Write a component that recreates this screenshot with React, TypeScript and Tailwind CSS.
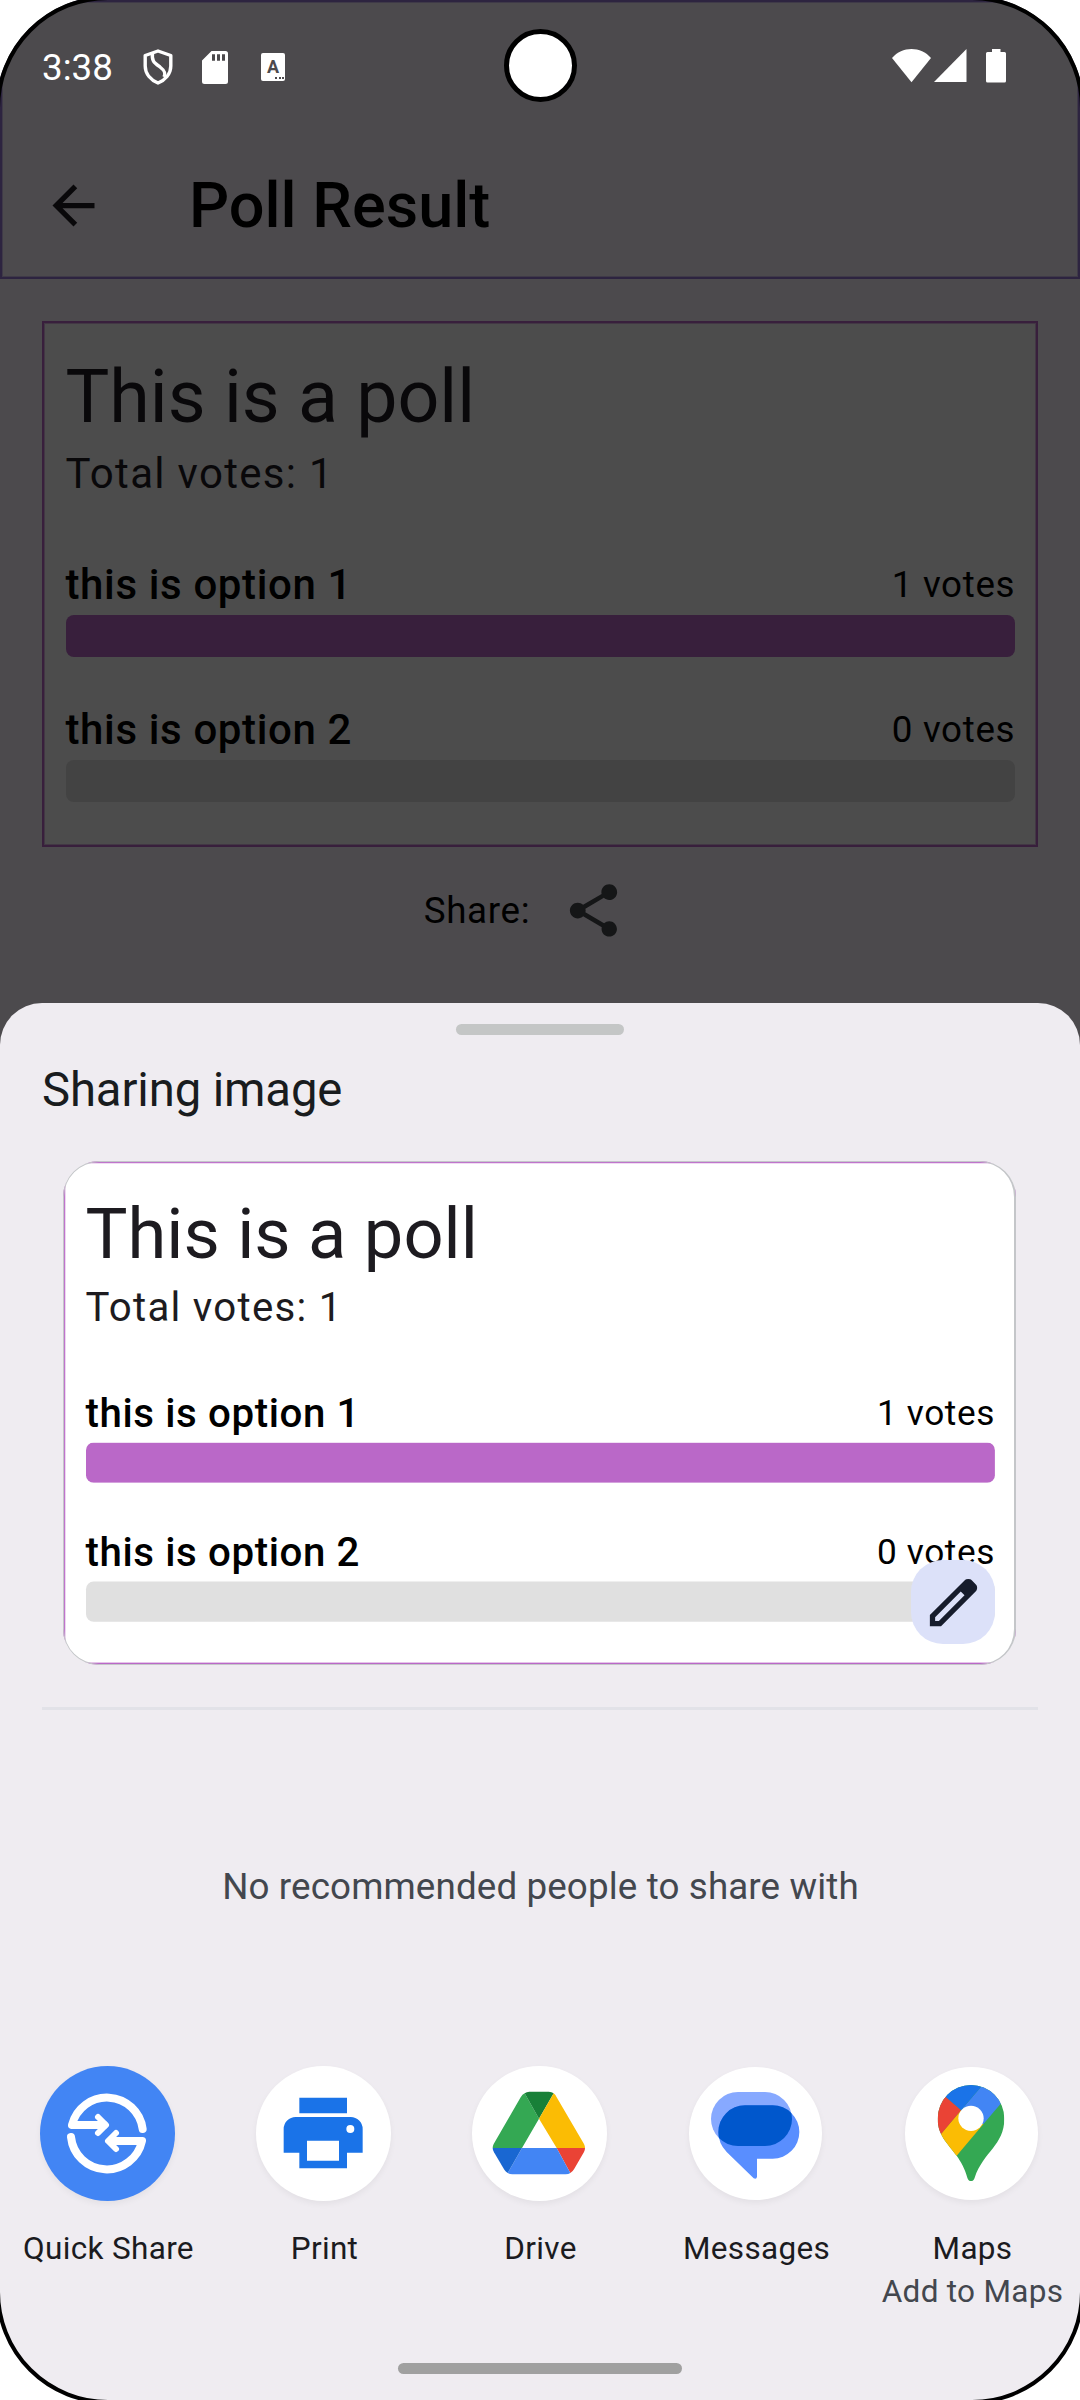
import React from "react";

type Theme = {
  card: string;
  title: string;
  text: string;
  strong: string;
  track: string;
  fill: string;
};

const DIMMED: Theme = {
  card: "bg-[#4c4c4c] border-[#381f3c] shadow-[inset_0_0_0_1px_rgba(56,31,60,0.45)]",
  title: "text-[#09080a]",
  text: "text-[#09080a]",
  strong: "text-black",
  track: "bg-[#434343]",
  fill: "bg-[#381f3c]",
};

const LIGHT: Theme = {
  card: "bg-white border-[#ba68c8] shadow-[inset_0_0_0_1px_rgba(186,104,200,0.3)]",
  title: "text-[#1d1b20]",
  text: "text-[#1d1b20]",
  strong: "text-black",
  track: "bg-[#e0e0e0]",
  fill: "bg-[#ba68c8]",
};

const OPTIONS = [
  { label: "this is option 1", votes: 1, share: 100 },
  { label: "this is option 2", votes: 0, share: 0 },
];

function PollCard({ theme }: { theme: Theme }) {
  return (
    <div className={`h-[526px] w-[996px] border-2 px-[21.5px] pt-[29px] ${theme.card}`}>
      <h2 className={`text-[73.5px] leading-[90px] ${theme.title}`}>This is a poll</h2>
      <p className={`text-[42px] leading-[63px] tracking-[1.31px] ${theme.text}`}>Total votes: 1</p>
      <div className="mt-[49px] flex flex-col gap-[42px]">
        {OPTIONS.map((o) => (
          <div key={o.label}>
            <div className={`flex h-[61px] items-start justify-between ${theme.strong}`}>
              <span className="text-[42px] font-medium leading-[61px] tracking-[0.63px]">{o.label}</span>
              <span className="-mr-[0.66px] text-[36.75px] leading-[62px] tracking-[0.66px]">{o.votes} votes</span>
            </div>
            <div className={`h-[42px] overflow-hidden rounded-lg ${theme.track}`}>
              <div className={`h-full ${theme.fill}`} style={{ width: `${o.share}%` }} />
            </div>
          </div>
        ))}
      </div>
    </div>
  );
}

function StatusBar() {
  return (
    <div className="flex h-[130px] items-center pl-[40px] text-white">
      <span className="w-[101px] pt-[2px] text-[36.75px] leading-[44px]">3:38</span>
      <svg className="h-[36px] w-[30px]" viewBox="0 0 30 36" fill="none" stroke="white" strokeWidth="3.4" strokeLinejoin="round">
        <path d="M15 2 L27.8 6.5 V17 C27.8 25 22 31 15 34 C8 31 2.2 25 2.2 17 V6.5Z" />
        <path d="M9.5 4 C8.500 12 11 13.500 17 18 C21.500 21.500 23 24 21 28" />
      </svg>
      <svg className="ml-[29px] h-[33px] w-[26px]" viewBox="0 0 26 33" fill="white">
        <path fillRule="evenodd" d="M9.5 0 H23.5 A2.5 2.5 0 0 1 26 2.5 V30.5 A2.5 2.5 0 0 1 23.5 33 H2.5 A2.5 2.5 0 0 1 0 30.5 V9.5Z M10 3.3 V9.7 H13 V3.3Z M15 3.3 V9.7 H18 V3.3Z M20 3.3 V9.7 H23 V3.3Z" />
      </svg>
      <div className="ml-[33px] flex h-[28px] w-[24px] flex-col items-center rounded-[2px] bg-white">
        <span className="mt-[5px] h-[17px] text-[18px] font-bold leading-[17px] text-[#4c4a4d]">A</span>
        <div className="mr-[1px] mt-[2px] flex gap-[1.5px] self-end">
          <i className="size-[2px] bg-[#4c4a4d]" />
          <i className="size-[2px] bg-[#4c4a4d]" />
          <i className="size-[2px] bg-[#4c4a4d]" />
        </div>
      </div>
      <svg className="mb-[2px] ml-[607px] h-[34px] w-[39px]" viewBox="0 0 39 34" fill="white">
        <path d="M0 9 C10 -3 29 -3 39 9 L19.5 33.3Z" />
      </svg>
      <svg className="mb-[2px] ml-[3px] h-[34px] w-[33px]" viewBox="0 0 33 34" fill="white">
        <path d="M0 33 H32.5 V0Z" />
      </svg>
      <svg className="mb-[2px] ml-[19px] h-[34px] w-[20px]" viewBox="0 0 20 34" fill="white">
        <path d="M6 0 H14.5 V3 H18.5 A1.5 1.5 0 0 1 20 4.5 V32 A1.5 1.5 0 0 1 18.5 33.5 H1.5 A1.5 1.5 0 0 1 0 32 V4.5 A1.5 1.5 0 0 1 1.5 3 H6Z" />
      </svg>
    </div>
  );
}

function QuickShareIcon() {
  return (
    <svg className="size-full" viewBox="120 78 405 405" fill="none" stroke="white" strokeLinecap="round" strokeLinejoin="round">
      <path d="M428 267 A108 108 0 0 0 216 255 H312" strokeWidth="24" />
      <path d="M294 231 L318 255 L294 279" strokeWidth="18" />
      <path d="M213 291 A108 108 0 0 0 426 303 H332" strokeWidth="24" />
      <path d="M348 279 L324 303 L348 327" strokeWidth="18" />
    </svg>
  );
}

function PrintIcon() {
  return (
    <svg className="size-full" viewBox="768 78 405 405" fill="#1a73e8">
      <path d="M898 173 H1041 V220 H898Z" />
      <path fillRule="evenodd" d="M887 231 H1052 a36 36 0 0 1 36 36 V338 H1041 V385 H898 V338 H851 V267 a36 36 0 0 1 36 -36Z M921 302 V362 H1017 V302Z" />
      <circle cx="1051" cy="267" r="12" fill="white" />
    </svg>
  );
}

function DriveIcon() {
  return (
    <svg className="size-full" viewBox="216 78 405 405">
      <path fill="#34a853" d="M374 160 L417 236 L366 324 H278 Q278 318 281 312 L362 172 Q367 163 374 160Z" />
      <path fill="#188038" d="M374 160 Q380 155 388 155 H446 Q455 155 461 160 L417 236Z" />
      <path fill="#fbbc04" d="M461 160 Q467 165 470 172 L552 312 Q555 318 555 324 H470 L417 236Z" />
      <path fill="#ea4335" d="M470 324 H555 Q555 331 552 336 L522 388 Q518 395 511 399Z" />
      <path fill="#4285f4" d="M366 324 H470 L511 399 Q505 403 497 403 H337 Q329 403 323 399Z" />
      <path fill="#1967d2" d="M278 324 H366 L323 399 Q317 395 313 389 L282 337 Q278 330 278 324Z" />
    </svg>
  );
}

function MessagesIcon() {
  return (
    <svg className="size-full" viewBox="27 81 399 399">
      <clipPath id="back-bubble">
        <rect x="93" y="156" width="243" height="162" rx="81" />
      </clipPath>
      <rect x="93" y="156" width="243" height="162" rx="81" fill="#87a9ff" />
      <path fill="#598eff" d="M195 196 H278 a80 80 0 0 1 0 160 H231 V410 Q230 419 221 415 L140 336 Q115 310 115 276 A80 80 0 0 1 195 196Z" />
      <path clipPath="url(#back-bubble)" fill="#0057cc" d="M195 196 H278 a80 80 0 0 1 0 160 H231 V410 L140 336 Q115 310 115 276 A80 80 0 0 1 195 196Z" />
    </svg>
  );
}

function MapsIcon() {
  return (
    <svg className="size-full" viewBox="675 81 399 399">
      <clipPath id="pin">
        <path d="M873 135 A100 101 0 0 1 973 236 C973 315 910 335 884 413 Q881 423 873 423 Q865 423 862 413 C853 382 843 366 830 347 C802 309 773 285 773 236 A100 101 0 0 1 873 135Z" />
      </clipPath>
      <g clipPath="url(#pin)">
        <path fill="#34a853" d="M760 120 H990 V430 H760Z" />
        <path fill="#fbbc04" d="M770 297 L843 211 L911 251 L830 347 L780 406Z" />
        <path fill="#4285f4" d="M902 142 L843 211 L873 260 L911 251 L962 191 L1004 141 L930 109Z" />
        <path fill="#1a73e8" d="M755 135 L799 173 L843 211 L902 142 L930 109 L755 100Z" />
        <path fill="#ea4335" d="M755 135 L843 211 L784 281 L740 332Z" />
      </g>
      <circle cx="873" cy="235" r="38" fill="white" />
    </svg>
  );
}

const APPS = [
  { name: "Quick Share", size: "size-[135px] bg-[#4285f4]", icon: <QuickShareIcon /> },
  { name: "Print", size: "size-[135px] bg-white", icon: <PrintIcon /> },
  { name: "Drive", size: "size-[135px] bg-white", icon: <DriveIcon /> },
  { name: "Messages", size: "size-[133px] bg-white", icon: <MessagesIcon /> },
  { name: "Maps", detail: "Add to Maps", size: "size-[133px] bg-white", icon: <MapsIcon /> },
];

function ShareSheet() {
  return (
    <section className="flex h-[1397px] flex-col rounded-t-[42px] bg-[#efecf1]">
      <div className="mx-auto mt-[21px] h-[11px] w-[168px] rounded-full bg-[#c4c6c6]" />
      <h2 className="mt-[26px] pl-[42px] text-[47.25px] leading-[58px] tracking-[-0.12px] text-[#191c1e]">Sharing image</h2>
      <div className="relative ml-[63px] mt-[42px] h-[504px] w-[953px]">
        <div className="size-full overflow-hidden rounded-[36px]">
          <div className="w-[996px] origin-top-left scale-[0.9578]">
            <PollCard theme={LIGHT} />
          </div>
        </div>
        <div className="absolute inset-0 rounded-[36px] border border-r-2 border-[#c4c6c9]" />
        <button className="absolute bottom-[21px] right-[21px] flex size-[84px] items-center justify-center rounded-[32px] bg-[#dce1f9]">
          <svg className="size-[63px]" viewBox="0 -960 960 960" fill="#161c2c">
            <path d="M200-200h57l391-391-57-57-391 391v57Zm-80 80v-170l528-527q12-11 26.5-17t30.5-6q16 0 31 6t26 18l55 56q12 11 17.5 26t5.5 30q0 16-5.5 30.5T817-647L290-120H120Z" />
          </svg>
        </button>
      </div>
      <div className="mx-[42px] mt-[42px] h-[3px] bg-[#e2e2e8]" />
      <p className="mt-[155px] pl-[1px] text-center text-[36.75px] leading-[44px] tracking-[0.13px] text-[#43474e]">
        No recommended people to share with
      </p>
      <div className="mt-[157px] grid grid-cols-5">
        {APPS.map((app) => (
          <div key={app.name} className="flex flex-col items-center text-center text-[31.5px] leading-[43px]">
            <div className="mr-[1px] flex h-[135px] items-center">
              <div className={`overflow-hidden rounded-full shadow-[0_3px_6px_rgba(0,0,0,0.05)] ${app.size}`}>{app.icon}</div>
            </div>
            <span className="mt-[26px] whitespace-nowrap pl-[1px] tracking-[0.32px] text-[#1b1b1f]">{app.name}</span>
            {app.detail && <span className="whitespace-nowrap pl-[1px] tracking-[0.3px] text-[#43474e]">{app.detail}</span>}
          </div>
        ))}
      </div>
      <div className="mx-auto mb-[26px] mt-auto h-[11px] w-[284px] rounded-full bg-[#a0a0a0]" />
    </section>
  );
}

export default function App() {
  return (
    <main className="relative flex h-[2400px] w-[1080px] flex-col overflow-hidden bg-[#4c4a4d] font-['Roboto',sans-serif]">
      <header className="h-[279px] border-2 border-[#2d2440] shadow-[inset_0_0_0_1px_rgba(45,36,64,0.4)]">
        <StatusBar />
        <div className="flex h-[147px] items-center pl-[40px]">
          <svg className="size-[63px]" viewBox="0 0 24 24" fill="#09080a">
            <path d="M20 11H7.83l5.59-5.59L12 4l-8 8 8 8 1.41-1.41L7.83 13H20v-2z" />
          </svg>
          <h1 className="ml-[84px] text-[63px] font-medium leading-[76px] text-black">Poll Result</h1>
        </div>
      </header>
      <div className="mt-[42px] flex flex-col items-center">
        <PollCard theme={DIMMED} />
        <div className="mt-[32px] flex h-[63px] items-center pr-[31px]">
          <span className="text-[36.75px] tracking-[0.66px] text-black">Share:</span>
          <svg className="ml-[32px] size-[63px]" viewBox="0 0 24 24" fill="#151617">
            <path d="M18 16.08c-.76 0-1.44.3-1.96.77L8.91 12.7c.05-.23.09-.46.09-.7s-.04-.47-.09-.7l7.05-4.11c.54.5 1.25.81 2.04.81 1.66 0 3-1.34 3-3s-1.34-3-3-3-3 1.34-3 3c0 .24.04.47.09.7L8.04 9.81C7.5 9.31 6.79 9 6 9c-1.66 0-3 1.34-3 3s1.34 3 3 3c.79 0 1.5-.31 2.04-.81l7.12 4.16c-.05.21-.08.43-.08.65 0 1.61 1.31 2.92 2.92 2.92 1.61 0 2.92-1.31 2.92-2.92s-1.31-2.92-2.92-2.92z" />
          </svg>
        </div>
      </div>
      <div className="mt-auto">
        <ShareSheet />
      </div>
      {/* Camera cutout */}
      <div className="absolute left-[504px] top-[29px] size-[73px] rounded-full border-[5px] border-black bg-white" />
      {/* Rounded display frame */}
      <div className="pointer-events-none absolute -inset-1 rounded-[112px] border-4 border-black shadow-[0_0_0_80px_white]" />
    </main>
  );
}
